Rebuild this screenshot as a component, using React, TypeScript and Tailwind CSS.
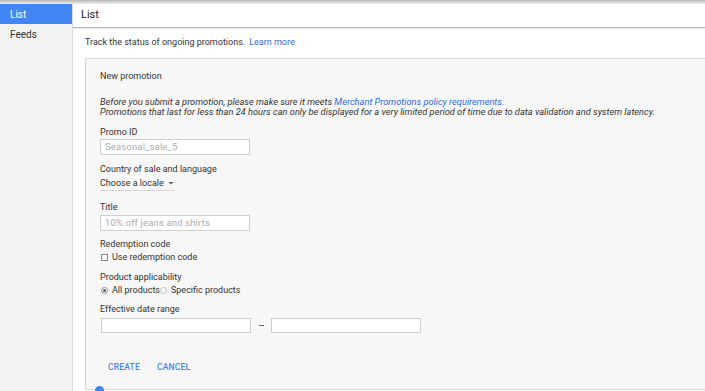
import React from "react";

export default function App() {
  const font = { fontFamily: "Roboto, 'Liberation Sans', sans-serif" };
  return (
    <div className="w-[705px] h-[391px] overflow-hidden bg-white text-[#212121] relative" style={font}>
      <div className="h-[4px] bg-gradient-to-b from-[#b8b8b8] to-[#f0f0f0]" />
      <div className="flex h-[387px]">
        <div className="w-[73px] shrink-0 bg-[#f2f2f2] border-r border-[#dcdcdc] flex flex-col">
          <div className="h-[20px] bg-[#4285f4] text-white text-[10px] pl-[10px] flex items-center">List</div>
          <div className="h-[20px] text-[10px] pl-[10px] flex items-center text-[#333]">Feeds</div>
        </div>
        <div className="flex-1 flex flex-col min-w-0">
          <div className="h-[24px] shrink-0 flex items-center pl-[8px] text-[11px] border-b border-[#b5b5b5] shadow-[0_1px_1px_rgba(0,0,0,0.08)]">List</div>
          <div className="h-[30px] shrink-0 flex items-center pl-[12px] text-[9px] text-[#333]">
            Track the status of ongoing promotions.<span className="ml-[4px] text-[#3367d6]">Learn more</span>
          </div>
          <div className="ml-[12px] -mr-[10px] flex-1 bg-[#f7f7f7] border border-[#d8d8d8] pl-[14px] pt-[11px] text-[#333] mb-[1px]">
            <div className="text-[9px] h-[12px] leading-[12px]">New promotion</div>
            <div className="mt-[15px] text-[9.25px] italic leading-[10px]">
              <div>Before you submit a promotion, please make sure it meets <span className="text-[#3367d6]">Merchant Promotions policy requirements.</span></div>
              <div>Promotions that last for less than 24 hours can only be displayed for a very limited period of time due to data validation and system latency.</div>
            </div>
            <div className="mt-[9px] text-[9px] leading-[12px]">Promo ID</div>
            <div className="mt-[1px] w-[150px] h-[16px] bg-white border border-[#cfcfcf] text-[9.5px] tracking-[0.15px] text-[#aaa] pl-[4px] leading-[14px]">Seasonal_sale_5</div>
            <div className="mt-[8px] text-[9px] leading-[12px]">Country of sale and language</div>
            <div className="mt-[1px] w-[75px] border-b border-[#d8d8d8] text-[9px] leading-[14px] flex items-center whitespace-nowrap">
              Choose a locale
              <svg width="8" height="8" viewBox="0 0 8 8" className="ml-[3px]"><path d="M1.5 3 L6.5 3 L4 5.5Z" fill="#666" /></svg>
            </div>
            <div className="mt-[10px] text-[9px] leading-[12px]">Title</div>
            <div className="mt-[2px] w-[150px] h-[16px] bg-white border border-[#cfcfcf] text-[9.5px] tracking-[0.15px] text-[#aaa] pl-[4px] leading-[14px]">10% off jeans and shirts</div>
            <div className="mt-[7px] text-[9px] leading-[12px]">Redemption code</div>
            <div className="mt-[1px] flex items-center text-[9px] leading-[12px]">
              <span className="w-[7px] h-[7px] border border-[#888] bg-white mr-[4px] ml-[1px]" />
              Use redemption code
            </div>
            <div className="mt-[8px] text-[9px] leading-[12px]">Product applicability</div>
            <div className="mt-[1px] flex items-center text-[9px] leading-[12px]">
              <span className="w-[7px] h-[7px] rounded-full border border-[#888] bg-white mr-[4px] ml-[1px] flex items-center justify-center">
                <span className="w-[3px] h-[3px] rounded-full bg-[#555]" />
              </span>
              All products
              <span className="w-[7px] h-[7px] rounded-full border border-[#bbb] bg-white mr-[4px]" />
              Specific products
            </div>
            <div className="mt-[7px] text-[9px] leading-[12px]">Effective date range</div>
            <div className="mt-[3px] flex items-center">
              <div className="w-[150px] h-[15px] bg-white border border-[#cfcfcf] ml-[1px]" />
              <div className="w-[20px] flex justify-center"><span className="w-[5px] h-px bg-[#666]" /></div>
              <div className="w-[150px] h-[15px] bg-white border border-[#cfcfcf]" />
            </div>
            <div className="mt-[28px] flex gap-[17px] pl-[8px] text-[8.5px] font-medium text-[#4285f4] tracking-[0.2px]">
              <span>CREATE</span>
              <span>CANCEL</span>
            </div>
          </div>
        </div>
      </div>
      <div className="absolute left-[95px] top-[386px] w-[9px] h-[9px] rounded-full bg-[#4285f4]" />
    </div>
  );
}
